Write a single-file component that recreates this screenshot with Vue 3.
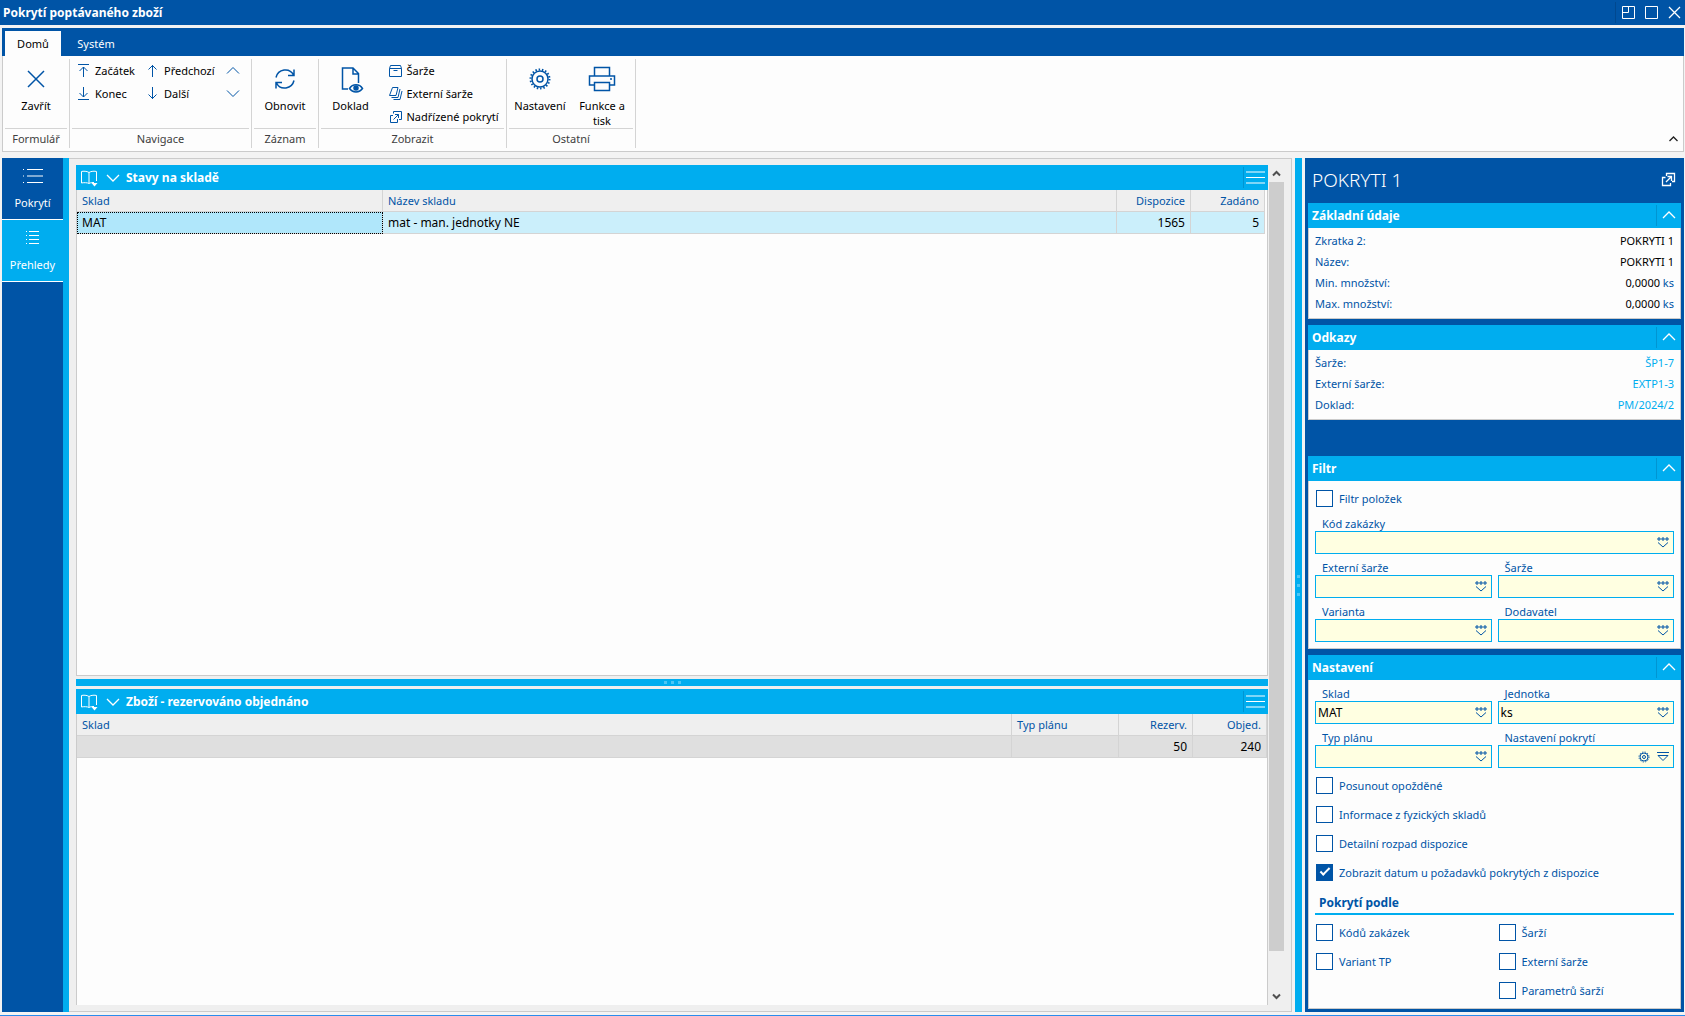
<script setup>
import { ref } from 'vue'

const navItems = ref([
  { label: 'Začátek', d: 'M2 1.5h11M7.500 14V4M3.500 8l4-4 4 4' },
  { label: 'Předchozí', d: 'M7.500 14V2M3.500 6.500l4-4 4 4' },
  { label: 'Konec', d: 'M2 13.500h11M7.500 1v10M3.500 7l4 4 4-4' },
  { label: 'Další', d: 'M7.500 1v12M3.500 8.500l4 4 4-4' },
])

const basics = ref([
  { label: 'Zkratka 2:', value: 'POKRYTI 1' },
  { label: 'Název:', value: 'POKRYTI 1' },
  { label: 'Min. množství:', value: '0,0000', unit: 'ks' },
  { label: 'Max. množství:', value: '0,0000', unit: 'ks' },
])

const links = ref([
  { label: 'Šarže:', value: 'ŠP1-7' },
  { label: 'Externí šarže:', value: 'EXTP1-3' },
  { label: 'Doklad:', value: 'PM/2024/2' },
])

const filterOn = ref(false)
const filterFields = ref([
  { id: 'zakazka', label: 'Kód zakázky', value: '', wide: true },
  { id: 'ext-sarze', label: 'Externí šarže', value: '' },
  { id: 'sarze', label: 'Šarže', value: '' },
  { id: 'varianta', label: 'Varianta', value: '' },
  { id: 'dodavatel', label: 'Dodavatel', value: '' },
])

const settingFields = ref([
  { id: 'sklad', label: 'Sklad', value: 'MAT' },
  { id: 'jednotka', label: 'Jednotka', value: 'ks' },
  { id: 'typ-planu', label: 'Typ plánu', value: '' },
  { id: 'nastaveni', label: 'Nastavení pokrytí', value: '', gear: true },
])

const options = ref([
  { label: 'Posunout opožděné', on: false },
  { label: 'Informace z fyzických skladů', on: false },
  { label: 'Detailní rozpad dispozice', on: false },
  { label: 'Zobrazit datum u požadavků pokrytých z dispozice', on: true },
])

const coverLeft = ref([
  { label: 'Kódů zakázek', on: false },
  { label: 'Variant TP', on: false },
])
const coverRight = ref([
  { label: 'Šarží', on: false },
  { label: 'Externí šarže', on: false },
  { label: 'Parametrů šarží', on: false },
])
</script>

<template>
  <div class="window">
    <header class="titlebar">
      <h1>Pokrytí poptávaného zboží</h1>
      <div class="window-buttons">
        <button type="button" aria-label="Ukotvit">
          <svg width="13" height="13" viewBox="0 0 13 13"><path d="M.5.5h12v12H.5zM.5 6.500h6v-6" /></svg>
        </button>
        <button type="button" aria-label="Maximalizovat">
          <svg width="13" height="13" viewBox="0 0 13 13"><path d="M.5.5h12v12H.5z" /></svg>
        </button>
        <button type="button" aria-label="Zavřít okno">
          <svg width="13" height="13" viewBox="0 0 13 13" class="medium"><path d="M1 1l11 11M12 1L1 12" /></svg>
        </button>
      </div>
    </header>

    <nav class="tabs">
      <button type="button" class="tab active">Domů</button>
      <button type="button" class="tab">Systém</button>
    </nav>

    <section class="ribbon">
      <div class="group g-form">
        <div class="tools">
          <button type="button" class="big">
            <svg width="28" height="28" viewBox="0 0 28 28" class="thick"><path d="M6 6l16 16M22 6L6 22" /></svg>
            <span>Zavřít</span>
          </button>
        </div>
        <div class="caption">Formulář</div>
      </div>

      <div class="group g-nav">
        <div class="tools nav-tools">
          <div class="nav-grid">
            <button v-for="n in navItems" :key="n.label" type="button" class="small">
              <svg width="15" height="15" viewBox="0 0 15 15"><path :d="n.d" /></svg>
              <span>{{ n.label }}</span>
            </button>
          </div>
          <div class="nav-arrows">
            <button type="button" class="small" aria-label="Nahoru">
              <svg width="14" height="15" viewBox="0 0 14 15"><path d="M1 10.500l6-6 6 6" /></svg>
            </button>
            <button type="button" class="small" aria-label="Dolů">
              <svg width="14" height="15" viewBox="0 0 14 15"><path d="M1 4.500l6 6 6-6" /></svg>
            </button>
          </div>
        </div>
        <div class="caption">Navigace</div>
      </div>

      <div class="group g-record">
        <div class="tools">
          <button type="button" class="big">
            <svg width="28" height="28" viewBox="0 0 28 28" class="thick">
              <path d="M5 12.500C7 4 18.500 2 22.500 10M17 10.500h6v-6M23 15.500C21 24 9.500 26 5.500 18M11 17.500H5v6" />
            </svg>
            <span>Obnovit</span>
          </button>
        </div>
        <div class="caption">Záznam</div>
      </div>

      <div class="group g-view">
        <div class="tools">
          <button type="button" class="big">
            <svg width="28" height="28" viewBox="0 0 28 28" class="thick">
              <path d="M11 24H5.500V3H16l5.500 5.500V18M16 3v6h5.500" />
              <path d="M12.500 23.500c3-5 10-5 13 0c-3 4.500-10 4.500-13 0z" />
              <circle cx="19" cy="23" r="2" class="dot" />
            </svg>
            <span>Doklad</span>
          </button>
          <div class="stack">
            <button type="button" class="small">
              <svg width="15" height="15" viewBox="0 0 15 15"><path d="M1.500 5.500h12v8h-12zM1.500 5.500l1-3h10l1 3M5.500 7.500h4" /></svg>
              <span>Šarže</span>
            </button>
            <button type="button" class="small">
              <svg width="15" height="15" viewBox="0 0 15 15"><path d="M4.500 1.500h5.500l-2 8H1.500zM12 3l-2 8.500H3.500M14 5l-2 8.500H5.500" /></svg>
              <span>Externí šarže</span>
            </button>
            <button type="button" class="small">
              <svg width="15" height="15" viewBox="0 0 15 15"><path d="M5 6.500H2.500v7h7V10M5.500 4.500v-2h8v8H11M5.500 10.500l5-5M7 5.500h3.500V9" /></svg>
              <span>Nadřízené pokrytí</span>
            </button>
          </div>
        </div>
        <div class="caption">Zobrazit</div>
      </div>

      <div class="group g-other">
        <div class="tools">
          <button type="button" class="big">
            <svg width="28" height="28" viewBox="0 0 28 28" class="thick">
              <circle cx="14" cy="14" r="8" /><circle cx="14" cy="14" r="3" />
              <circle cx="14" cy="14" r="9.500" class="teeth" />
            </svg>
            <span>Nastavení</span>
          </button>
          <button type="button" class="big">
            <svg width="28" height="28" viewBox="0 0 28 28" class="thick">
              <path d="M6.500 11V2.500h15V11M6.500 20H1.500v-9h25v9h-5M6.500 17.500h15v8h-15zM22 14h2" />
            </svg>
            <span>Funkce a tisk</span>
          </button>
        </div>
        <div class="caption">Ostatní</div>
      </div>

      <button type="button" class="collapse" aria-label="Sbalit pás karet">
        <svg width="9" height="6" viewBox="0 0 9 6" class="medium"><path d="M.5 5l4-4 4 4" /></svg>
      </button>
    </section>

    <div class="body">
      <nav class="sidebar">
        <button type="button">
          <svg width="22" height="20" viewBox="0 0 22 20"><path d="M1 3.500h1M5 3.500h16M1 10h1M5 10h16M1 16.500h1M5 16.500h16" /></svg>
          <span>Pokrytí</span>
        </button>
        <button type="button" class="active">
          <svg width="22" height="20" viewBox="0 0 22 20"><path d="M4 3.500h1M7 3.500h10M4 7.500h1M7 7.500h10M4 11.500h1M7 11.500h10M4 15.500h1M7 15.500h10" /></svg>
          <span>Přehledy</span>
        </button>
      </nav>

      <main class="frame">
        <div class="panes">
          <section class="pane upper">
            <header class="pane-head">
              <svg width="18" height="18" viewBox="0 0 18 18"><path d="M9 3.500C7 2 3 2 1.500 2.500V14c2-.5 6-.5 7.500.5 1.500-1 4-1 5-1M9 3.500V14M9 3.500C11 2 15 2 16.500 2.500V12" /><path d="M11.500 14h6l-3 3.500z" class="fill" /></svg>
              <svg width="14" height="8" viewBox="0 0 14 8" class="medium"><path d="M1 1l6 6 6-6" /></svg>
              <h2>Stavy na skladě</h2>
              <button type="button" aria-label="Nabídka"><svg width="19" height="13" viewBox="0 0 19 13"><path d="M0 1h19M0 6.500h19M0 12h19" /></svg></button>
            </header>
            <div class="grid">
              <table class="t-stock">
                <colgroup><col class="c-sklad" /><col /><col class="c-num" /><col class="c-num" /></colgroup>
                <thead>
                  <tr><th>Sklad</th><th>Název skladu</th><th class="num">Dispozice</th><th class="num">Zadáno</th></tr>
                </thead>
                <tbody>
                  <tr><td class="focus">MAT</td><td>mat - man. jednotky NE</td><td class="num">1565</td><td class="num">5</td></tr>
                </tbody>
              </table>
            </div>
          </section>

          <div class="h-split"><i></i><i></i><i></i></div>

          <section class="pane lower">
            <header class="pane-head">
              <svg width="18" height="18" viewBox="0 0 18 18"><path d="M9 3.500C7 2 3 2 1.500 2.500V14c2-.5 6-.5 7.500.5 1.500-1 4-1 5-1M9 3.500V14M9 3.500C11 2 15 2 16.500 2.500V12" /><path d="M11.500 14h6l-3 3.500z" class="fill" /></svg>
              <svg width="14" height="8" viewBox="0 0 14 8" class="medium"><path d="M1 1l6 6 6-6" /></svg>
              <h2>Zboží - rezervováno objednáno</h2>
              <button type="button" aria-label="Nabídka"><svg width="19" height="13" viewBox="0 0 19 13"><path d="M0 1h19M0 6.500h19M0 12h19" /></svg></button>
            </header>
            <div class="grid">
              <table class="t-goods">
                <colgroup><col /><col class="c-plan" /><col class="c-num" /><col class="c-num" /></colgroup>
                <thead>
                  <tr><th>Sklad</th><th>Typ plánu</th><th class="num">Rezerv.</th><th class="num">Objed.</th></tr>
                </thead>
                <tbody>
                  <tr><td></td><td></td><td class="num">50</td><td class="num">240</td></tr>
                </tbody>
              </table>
            </div>
          </section>
        </div>

        <div class="scrollbar">
          <button type="button" aria-label="Posunout nahoru"><svg width="9" height="7" viewBox="0 0 9 7"><path d="M1 5.500L4.500 2 8 5.500" /></svg></button>
          <div class="track"><div class="thumb"></div></div>
          <button type="button" aria-label="Posunout dolů"><svg width="9" height="7" viewBox="0 0 9 7"><path d="M1 1.500L4.500 5 8 1.500" /></svg></button>
        </div>
      </main>

      <div class="v-split"><i></i><i></i><i></i></div>

      <aside class="panel">
        <div class="panel-title">
          <h2>POKRYTI 1</h2>
          <button type="button" aria-label="Otevřít">
            <svg width="15" height="15" viewBox="0 0 15 15" class="medium"><path d="M4.500 5.500h-3v8h8V11M5.500 4V1.500h8v8H11M5 10l5.500-5.500M6.500 4.500h4V9" /></svg>
          </button>
        </div>

        <section class="card">
          <header><h3>Základní údaje</h3><button type="button" aria-label="Sbalit"><svg width="14" height="8" viewBox="0 0 14 8" class="medium"><path d="M1 7l6-6 6 6" /></svg></button></header>
          <dl>
            <div v-for="b in basics" :key="b.label"><dt>{{ b.label }}</dt><dd>{{ b.value }} <span v-if="b.unit">{{ b.unit }}</span></dd></div>
          </dl>
        </section>

        <section class="card links">
          <header><h3>Odkazy</h3><button type="button" aria-label="Sbalit"><svg width="14" height="8" viewBox="0 0 14 8" class="medium"><path d="M1 7l6-6 6 6" /></svg></button></header>
          <dl>
            <div v-for="l in links" :key="l.label"><dt>{{ l.label }}</dt><dd><a href="#">{{ l.value }}</a></dd></div>
          </dl>
        </section>

        <section class="card">
          <header><h3>Filtr</h3><button type="button" aria-label="Sbalit"><svg width="14" height="8" viewBox="0 0 14 8" class="medium"><path d="M1 7l6-6 6 6" /></svg></button></header>
          <div class="form filter">
            <label class="check"><input v-model="filterOn" type="checkbox" /><span>Filtr položek</span></label>
            <div class="fields">
              <div v-for="f in filterFields" :key="f.id" class="field" :class="{ wide: f.wide }">
                <label :for="f.id">{{ f.label }}</label>
                <div class="box">
                  <input :id="f.id" v-model="f.value" type="text" />
                  <button type="button" aria-label="Vybrat"><svg width="12" height="11" viewBox="0 0 12 11"><path d="M1 1h2v2h-2zM5 1h2v2h-2zM9 1h2v2h-2zM1 5.500l5 4.500 5-4.500" /></svg></button>
                </div>
              </div>
            </div>
          </div>
        </section>

        <section class="card grow">
          <header><h3>Nastavení</h3><button type="button" aria-label="Sbalit"><svg width="14" height="8" viewBox="0 0 14 8" class="medium"><path d="M1 7l6-6 6 6" /></svg></button></header>
          <div class="form">
            <div class="fields">
              <div v-for="f in settingFields" :key="f.id" class="field">
                <label :for="f.id">{{ f.label }}</label>
                <div class="box">
                  <input :id="f.id" v-model="f.value" type="text" />
                  <template v-if="f.gear">
                    <button type="button" aria-label="Upravit nastavení"><svg width="12" height="12" viewBox="0 0 12 12"><circle cx="6" cy="6" r="4" /><circle cx="6" cy="6" r="1.500" /><circle cx="6" cy="6" r="5" class="mini-teeth" /></svg></button>
                    <button type="button" aria-label="Rozbalit"><svg width="12" height="11" viewBox="0 0 12 11"><path d="M0 1.500h12M1 4.500h10L6 9.500z" /></svg></button>
                  </template>
                  <button v-else type="button" aria-label="Vybrat"><svg width="12" height="11" viewBox="0 0 12 11"><path d="M1 1h2v2h-2zM5 1h2v2h-2zM9 1h2v2h-2zM1 5.500l5 4.500 5-4.500" /></svg></button>
                </div>
              </div>
            </div>
            <div class="checks">
              <label v-for="o in options" :key="o.label" class="check"><input v-model="o.on" type="checkbox" /><span>{{ o.label }}</span></label>
            </div>
            <h4>Pokrytí podle</h4>
            <div class="cover">
              <div class="checks">
                <label v-for="o in coverLeft" :key="o.label" class="check"><input v-model="o.on" type="checkbox" /><span>{{ o.label }}</span></label>
              </div>
              <div class="checks">
                <label v-for="o in coverRight" :key="o.label" class="check"><input v-model="o.on" type="checkbox" /><span>{{ o.label }}</span></label>
              </div>
            </div>
          </div>
        </section>
      </aside>
    </div>
  </div>
</template>

<style>
body {
  margin: 0;
  background: #f0f0f0;
}
</style>

<style scoped>
.window {
  --blue: #0054a6;
  --cyan: #00adef;
  --paper: #fdfdfd;
  --line: #cbcbcb;
  box-sizing: border-box;
  min-height: 100vh;
  display: flex;
  flex-direction: column;
  border-bottom: 1px solid #2a8cec;
  background: #f3f3f3;
  font-family: "Noto Sans", "Open Sans", sans-serif;
  font-size: 11px;
  line-height: 15px;
  color: #000;
}
.window *,
.window *::before {
  box-sizing: border-box;
}
button {
  padding: 0;
  border: 0;
  background: none;
  font: inherit;
  color: inherit;
}
h1, h2, h3, h4, dl, dd {
  margin: 0;
}
svg {
  display: block;
  flex: none;
  fill: none;
  stroke: currentColor;
}
.fill {
  fill: currentColor;
  stroke: none;
}
.medium {
  stroke-width: 1.3;
}
.thick {
  stroke-width: 1.5;
}
.teeth {
  stroke-width: 2;
  stroke-dasharray: 1.500 1.815;
}
.mini-teeth {
  stroke-dasharray: 1.300 1.318;
}
.dot {
  fill: currentColor;
}

.titlebar {
  display: flex;
  align-items: center;
  justify-content: space-between;
  height: 25px;
  padding: 0 4px 0 3px;
  background: var(--blue);
  color: #fff;
}
.titlebar h1 {
  font-size: 12px;
  line-height: 16px;
  font-weight: 700;
}
.window-buttons {
  display: flex;
  gap: 10px;
  padding: 4px 0 4px 6px;
  border-left: 1px solid #00488f;
}

.tabs {
  display: flex;
  height: 28px;
  margin: 3px 1px 0 2px;
  padding: 3px 3px 0;
  background: var(--blue);
  color: #fff;
}
.tab {
  width: 56px;
}
.tab + .tab {
  width: 70px;
}
.tab.active {
  background: var(--paper);
  color: #000;
}

.ribbon {
  display: flex;
  margin: 0 1px 0 2px;
  padding: 3px 0;
  border: 1px solid var(--line);
  border-top: 0;
  background: var(--paper);
}
.group {
  display: flex;
  flex-direction: column;
  border-right: 1px solid #d4d4d4;
}
.g-form { width: 67px; }
.g-nav { width: 182px; }
.g-record { width: 67px; }
.g-view { width: 188px; }
.g-other { width: 129px; }
.tools {
  display: flex;
  justify-content: center;
  height: 69px;
}
.caption {
  margin: 0 2px;
  border-top: 1px solid #d4d4d4;
  line-height: 19px;
  text-align: center;
  color: #404040;
}
.big {
  display: flex;
  flex-direction: column;
  align-items: center;
  gap: 5px;
  width: 62px;
  padding-top: 6px;
}
.big svg,
.small svg {
  color: var(--blue);
}
.small {
  display: flex;
  align-items: center;
  gap: 4px;
  height: 23px;
  white-space: nowrap;
}
.nav-tools {
  justify-content: flex-start;
  padding-left: 6px;
}
.nav-grid {
  display: grid;
  grid-template-columns: 69px 81px;
  align-content: start;
}
.stack {
  display: flex;
  flex-direction: column;
  width: 124px;
  padding-left: 6px;
}
.collapse {
  margin: auto 5px 4px auto;
  padding: 2px 0;
  color: #202020;
}

.body {
  flex: 1;
  display: flex;
  margin: 6px 1px 3px 2px;
}
.sidebar {
  width: 67px;
  border-right: 6px solid var(--cyan);
  background: var(--blue);
  color: #fff;
}
.sidebar button {
  display: flex;
  flex-direction: column;
  align-items: center;
  gap: 9px;
  width: 100%;
  height: 62px;
  padding-top: 8px;
  border-bottom: 1px solid #fff;
}
.sidebar .active {
  background: var(--cyan);
}

.frame {
  flex: 1;
  display: flex;
  min-width: 0;
  padding: 6px 7px;
  border: 1px solid var(--line);
  border-left: 0;
  background: #efefef;
}
.panes {
  flex: 1;
  display: flex;
  flex-direction: column;
  gap: 3px;
  min-width: 0;
}
.pane {
  display: flex;
  flex-direction: column;
  flex-basis: 0;
}
.upper { flex-grow: 511; }
.lower { flex-grow: 316; }
.pane-head {
  display: flex;
  align-items: center;
  gap: 8px;
  height: 25px;
  padding-left: 4px;
  background: var(--cyan);
  color: #fff;
}
.pane-head h2 {
  flex: 1;
  margin-left: -2px;
  font-size: 12px;
  line-height: 16px;
}
.pane-head button {
  padding: 4px 3px 4px 2px;
  border-left: 1px solid #0095d2;
}
.grid {
  flex: 1;
  border: 1px solid var(--line);
  border-top: 0;
  background: var(--paper);
}
.lower .grid {
  border-bottom: 0;
}
table {
  table-layout: fixed;
  border-collapse: separate;
  border-spacing: 0;
}
.t-stock { width: calc(100% - 2px); }
.t-goods { width: 100%; }
.c-sklad { width: 306px; }
.c-num { width: 74px; }
.c-plan { width: 107px; }
th,
td {
  height: 22px;
  padding: 0 5px;
  border-right: 1px solid #d4d4d4;
  border-bottom: 1px solid #d4d4d4;
  text-align: left;
  white-space: nowrap;
}
th {
  background: #efefef;
  font-weight: 400;
  color: var(--blue);
}
td {
  font-size: 12px;
  background: #cbeffb;
}
.t-goods td {
  background: #dfdfdf;
}
td.focus {
  background: #b0e7fb;
  outline: 1px dotted #000;
  outline-offset: -1px;
}
.window .num {
  text-align: right;
}

.h-split {
  display: flex;
  align-items: center;
  justify-content: center;
  gap: 4px;
  height: 7px;
  background: var(--cyan);
}
.v-split {
  display: flex;
  flex-direction: column;
  align-items: center;
  justify-content: center;
  gap: 6px;
  width: 7px;
  margin: 0 3px;
  background: var(--cyan);
}
.h-split i,
.v-split i {
  width: 3px;
  height: 3px;
  background: #4cc6f5;
}

.scrollbar {
  display: flex;
  flex-direction: column;
  width: 15px;
  margin-left: 1px;
}
.scrollbar button {
  display: flex;
  align-items: center;
  justify-content: center;
  height: 17px;
  color: #505050;
}
.scrollbar svg {
  stroke-width: 2;
}
.track {
  flex: 1;
}
.thumb {
  height: 95.4%;
  background: #cdcdcd;
}

.panel {
  display: flex;
  flex-direction: column;
  gap: 6px;
  width: 379px;
  padding: 0 3px 3px;
  background: var(--blue);
  color: var(--blue);
}
.panel-title {
  display: flex;
  align-items: center;
  justify-content: space-between;
  height: 39px;
  padding: 4px 5px 0 4px;
  color: #fff;
}
.panel-title h2 {
  font-size: 19px;
  line-height: 24px;
  font-weight: 300;
}
.card {
  display: flex;
  flex-direction: column;
}
.grow {
  flex: 1;
}
.links {
  margin-bottom: 30px;
}
.card header {
  display: flex;
  align-items: center;
  justify-content: space-between;
  height: 25px;
  padding-left: 4px;
  background: var(--cyan);
  color: #fff;
}
.card h3 {
  font-size: 12px;
  line-height: 16px;
}
.card header button {
  padding: 6px 5px 7px;
  border-left: 1px solid #0095d2;
}
dl,
.form {
  flex: 1;
  border: 1px solid var(--line);
  border-top: 0;
  background: var(--paper);
}
dl {
  padding: 2px 6px 4px;
}
dl div {
  display: flex;
  justify-content: space-between;
  line-height: 21px;
}
dd {
  color: #000;
}
dd span {
  color: var(--blue);
}
dd a {
  color: var(--cyan);
  text-decoration: none;
}
.form {
  padding: 6px;
}
.filter {
  padding-top: 9px;
}
.filter .fields {
  margin-top: 9px;
}
.check {
  display: flex;
  align-items: center;
  gap: 6px;
  height: 17px;
  margin-left: 1px;
}
.check input {
  appearance: none;
  display: grid;
  place-items: center;
  width: 17px;
  height: 17px;
  margin: 0;
  border: 1px solid var(--blue);
  background: #fff;
}
.check input:checked {
  background: var(--blue);
}
.check input:checked::before {
  content: "";
  width: 10px;
  height: 5px;
  margin-bottom: 4px;
  border: solid #fff;
  border-width: 0 0 2px 2px;
  rotate: -45deg;
}
.checks {
  display: flex;
  flex-direction: column;
  gap: 12px;
}
.fields {
  display: grid;
  grid-template-columns: repeat(2, minmax(0, 1fr));
  gap: 6px;
}
.wide {
  grid-column: 1 / -1;
}
.field label {
  display: block;
  padding-left: 7px;
}
.box {
  display: flex;
  align-items: center;
  gap: 7px;
  height: 23px;
  padding-right: 4px;
  border: 1px solid var(--cyan);
  background: #ffffe1;
}
.box button {
  color: var(--blue);
}
.box input {
  flex: 1;
  min-width: 0;
  height: 21px;
  padding: 0 2px;
  border: 0;
  background: none;
  outline: 0;
  font: inherit;
  font-size: 12px;
  color: #000;
}
.fields + .checks {
  margin-top: 9px;
}
h4 {
  margin: 12px 0 9px;
  padding: 2px 4px;
  border-bottom: 2px solid var(--cyan);
  font-size: 12px;
  line-height: 16px;
}
.cover {
  display: grid;
  grid-template-columns: repeat(2, minmax(0, 1fr));
  gap: 6px;
}
</style>
